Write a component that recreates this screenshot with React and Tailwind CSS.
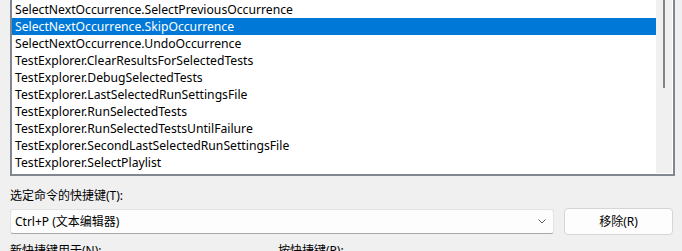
import React from "react";

const rows = [
  "SelectNextOccurrence.SelectPreviousOccurrence",
  "SelectNextOccurrence.SkipOccurrence",
  "SelectNextOccurrence.UndoOccurrence",
  "TestExplorer.ClearResultsForSelectedTests",
  "TestExplorer.DebugSelectedTests",
  "TestExplorer.LastSelectedRunSettingsFile",
  "TestExplorer.RunSelectedTests",
  "TestExplorer.RunSelectedTestsUntilFailure",
  "TestExplorer.SecondLastSelectedRunSettingsFile",
  "TestExplorer.SelectPlaylist",
];

export default function App() {
  return (
    <div
      className="w-[682px] h-[251px] overflow-hidden bg-[#f0f0f0] text-[12px] text-black pl-[10px] pr-[7px]"
      style={{ fontFamily: '"Noto Sans", "Noto Sans CJK SC", sans-serif' }}
    >
      {/* list box */}
      <div className="flex h-[176px] border-x-2 border-b-2 border-[#82868e] bg-white">
        <div className="flex-1 pt-[1px] text-[12.2px]">
          {rows.map((r, i) => (
            <div
              key={r}
              className={
                "h-[17px] leading-[17px] pl-[3px] whitespace-nowrap " +
                (i === 1 ? "bg-[#0078d7] text-white" : "")
              }
            >
              {r}
            </div>
          ))}
        </div>
        <div className="w-[16px] h-[173px] mr-[1px] bg-[#f0f0f0] flex justify-center">
          <div className="w-[2px] h-[88px] bg-[#858585]" />
        </div>
      </div>

      {/* label */}
      <div className="mt-[12px] h-[16px] leading-[16px]">选定命令的快捷键(T):</div>

      {/* combo + button */}
      <div className="mt-[4px] flex items-center pr-[2px]">
        <div className="w-[544px] h-[25px] rounded-[3px] border border-[#e3e3e3] border-b-[#a8a8a8] bg-[#fdfdfd] flex items-center pl-[4px] pr-[4px]">
          <span className="flex-1 leading-[16px]">Ctrl+P (文本编辑器)</span>
          <svg width="8" height="5" viewBox="0 0 8 5" className="mr-[3px]">
            <path d="M0.5 0.5 L4 4 L7.5 0.5" fill="none" stroke="#5f5f5f" strokeWidth="1" />
          </svg>
        </div>
        <div className="ml-[10px] w-[109px] h-[27px] rounded-[4px] border border-[#d5d5d5] bg-[#fdfdfd] flex items-center justify-center">
          移除(R)
        </div>
      </div>

      {/* bottom labels */}
      <div className="mt-[8px] flex leading-[16px]">
        <span className="w-[268px]">新快捷键用于(N):</span>
        <span>按快捷键(P):</span>
      </div>
    </div>
  );
}
